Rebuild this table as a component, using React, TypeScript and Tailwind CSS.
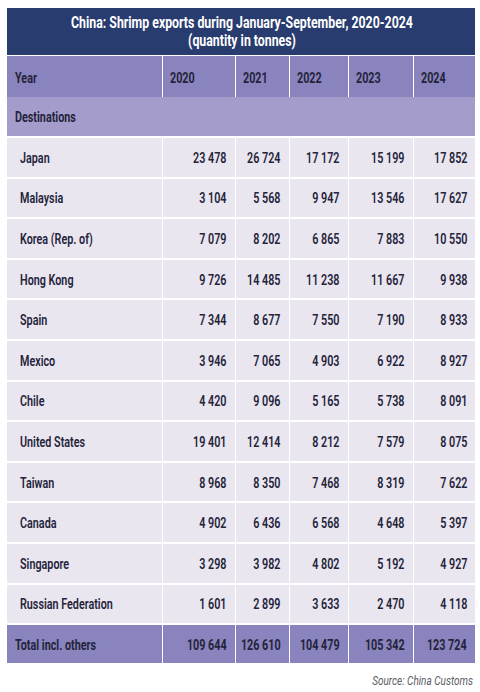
import React from "react"

const rows: [string, string, string, string, string, string][] = [
  ["Japan", "23 478", "26 724", "17 172", "15 199", "17 852"],
  ["Malaysia", "3 104", "5 568", "9 947", "13 546", "17 627"],
  ["Korea (Rep. of)", "7 079", "8 202", "6 865", "7 883", "10 550"],
  ["Hong Kong", "9 726", "14 485", "11 238", "11 667", "9 938"],
  ["Spain", "7 344", "8 677", "7 550", "7 190", "8 933"],
  ["Mexico", "3 946", "7 065", "4 903", "6 922", "8 927"],
  ["Chile", "4 420", "9 096", "5 165", "5 738", "8 091"],
  ["United States", "19 401", "12 414", "8 212", "7 579", "8 075"],
  ["Taiwan", "8 968", "8 350", "7 468", "8 319", "7 622"],
  ["Canada", "4 902", "6 436", "6 568", "4 648", "5 397"],
  ["Singapore", "3 298", "3 982", "4 802", "5 192", "4 927"],
  ["Russian Federation", "1 601", "2 899", "3 633", "2 470", "4 118"],
]

const years = ["2020", "2021", "2022", "2023", "2024"]
const totals = ["109 644", "126 610", "104 479", "105 342", "123 724"]

// condensed look: Roboto squeezed horizontally
function L({ children }: { children: React.ReactNode }) {
  return <span className="inline-block whitespace-nowrap scale-x-[0.77] origin-left">{children}</span>
}

function R({ children }: { children: React.ReactNode }) {
  return (
    <div className="flex justify-end">
      <span className="inline-block whitespace-nowrap scale-x-[0.77] origin-right">{children}</span>
    </div>
  )
}

export default function App() {
  return (
    <div className="w-[480px] h-[692px] bg-white pt-2 px-[7px] text-[#24233a] font-[Roboto,sans-serif]">
      <table className="w-[468px] table-fixed border-collapse">
        <colgroup>
          <col className="w-[155px]" />
          <col className="w-[73px]" />
          <col className="w-[54px]" />
          <col className="w-[59px]" />
          <col className="w-[65px]" />
          <col className="w-[62px]" />
        </colgroup>
        <thead>
          {/* Title */}
          <tr className="bg-[#293c70] h-[47px]">
            <th colSpan={6} className="text-white font-bold text-[16px] leading-[18px] p-0 pt-[2px]">
              <div className="flex flex-col items-center pl-[2px]">
                <span className="inline-block whitespace-nowrap scale-x-[0.77] origin-center">
                  China: Shrimp exports during January-September, 2020-2024
                </span>
                <span className="inline-block whitespace-nowrap scale-x-[0.77] origin-center">
                  (quantity in tonnes)
                </span>
              </div>
            </th>
          </tr>
          <tr className="bg-[#8a84be] h-[42px] text-[14px] font-bold text-left">
            <th className="pl-2 pt-[5px] border-r border-t border-white">
              <L>Year</L>
            </th>
            {years.map((y) => (
              <th key={y} className="pl-[7px] pt-[5px] border-r border-t border-white last:border-r-0">
                <L>{y}</L>
              </th>
            ))}
          </tr>
        </thead>
        <tbody>
          <tr className="bg-[#a49cca] h-[40px]">
            <td colSpan={6} className="pl-2 pt-[2px] text-[14px] font-bold">
              <L>Destinations</L>
            </td>
          </tr>
          {rows.map((r) => (
            <tr key={r[0]} className="bg-[#e9e6f0] h-[40.6px] text-[14px] font-semibold border-t-2 border-white">
              <td className="pl-[13px] pt-[2px] border-r border-white">
                <L>{r[0]}</L>
              </td>
              {r.slice(1).map((v, i) => (
                <td key={i} className="pr-2 pt-[2px] border-r border-white last:border-r-0">
                  <R>{v}</R>
                </td>
              ))}
            </tr>
          ))}
          <tr className="bg-[#8a84be] h-[39px] text-[14px] font-bold border-t-2 border-white">
            <td className="pl-2 pt-[2px] border-r border-white">
              <L>Total incl. others</L>
            </td>
            {totals.map((v, i) => (
              <td key={i} className="pr-2 pt-[2px] border-r border-white last:border-r-0">
                <R>{v}</R>
              </td>
            ))}
          </tr>
        </tbody>
      </table>
      <div className="mt-[8px] text-[13px] italic text-[#5c5c66]">
        <R>Source: China Customs</R>
      </div>
    </div>
  )
}
